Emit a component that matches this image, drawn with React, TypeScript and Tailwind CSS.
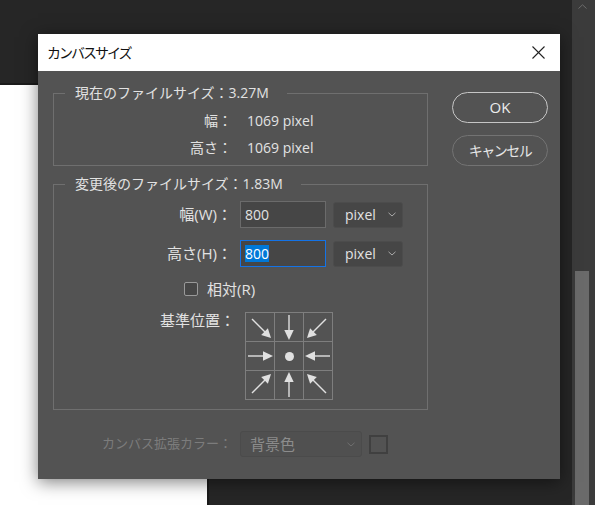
import React from "react";

const TXT = "text-[#e2e2e2]";

function Arrow({ diag, rot }: { diag?: boolean; rot: number }) {
  return (
    <svg width="28" height="28" viewBox="0 0 28 28">
      <g transform={`rotate(${rot} 14 14)`} fill="#e0e0e0" stroke="#e0e0e0">
        {diag ? (
          <>
            <line x1="6" y1="6" x2="19" y2="19" strokeWidth="1.4" />
            <polygon points="25,25 15.2,21.9 21.9,15.2" stroke="none" />
          </>
        ) : (
          <>
            <line x1="2" y1="14" x2="18" y2="14" strokeWidth="1.4" />
            <polygon points="27,14 17,9.3 17,18.7" stroke="none" />
          </>
        )}
      </g>
    </svg>
  );
}

function Chevron({ color = "#a8a8a8" }: { color?: string }) {
  return (
    <svg width="8" height="5" viewBox="0 0 8 5">
      <polyline points="0.5,0.8 4,4 7.5,0.8" fill="none" stroke={color} strokeWidth="1" />
    </svg>
  );
}

function UnitSelect() {
  return (
    <div className="flex h-[26px] w-[70px] items-center justify-between rounded-[3px] border border-[#4c4c4c] bg-[#464646] pl-[11px] pr-[6px]">
      <span className={`text-[14px] ${TXT}`}>pixel</span>
      <Chevron />
    </div>
  );
}

const cells: { diag?: boolean; rot?: number; dot?: boolean }[] = [
  { diag: true, rot: 0 },
  { rot: 90 },
  { diag: true, rot: 90 },
  { rot: 0 },
  { dot: true },
  { rot: 180 },
  { diag: true, rot: -90 },
  { rot: 270 },
  { diag: true, rot: 180 },
];

export default function App() {
  return (
    <div className="flex h-[505px] w-[595px] overflow-hidden bg-[#262626] font-['Open_Sans','Noto_Sans_CJK_JP',sans-serif]">
      {/* workspace */}
      <div className="relative flex-1">
        {/* document canvas behind the dialog */}
        <div className="absolute bottom-0 left-0 top-[83px] w-[209px] border-r-2 border-t-2 border-[#1b1b1b] bg-white" />

        {/* dialog window */}
        <div className="absolute left-[38px] top-[34px] flex h-[445px] w-[522px] flex-col shadow-[0_3px_16px_rgba(0,0,0,0.5)]">
          <div className="flex h-[37px] items-center justify-between bg-white pl-[9px] pr-[15px]">
            <span className="text-[14px] tracking-[-2px] text-[#111]">カンバスサイズ</span>
            <svg width="13" height="13" viewBox="0 0 13 13">
              <line x1="0.5" y1="0.5" x2="12.5" y2="12.5" stroke="#222" strokeWidth="1.1" />
              <line x1="12.5" y1="0.5" x2="0.5" y2="12.5" stroke="#222" strokeWidth="1.1" />
            </svg>
          </div>

          <div className="flex flex-1 gap-[24px] bg-[#535353] pl-[15px] pr-[12px] pt-[12px]">
            {/* left column */}
            <div className="flex w-[375px] flex-col">
              <fieldset className="border border-[#6f6f6f]">
                <legend className={`ml-[11px] pl-[10px] pr-[18px] text-[14px] leading-[20px] ${TXT}`}>
                  現在のファイルサイズ：3.27M
                </legend>
                <div className="flex flex-col pb-[4px] pt-[4px] text-[14px]">
                  <div className="flex h-[27px] items-center">
                    <span className={`w-[178px] text-right ${TXT}`}>幅：</span>
                    <span className={`ml-[15px] ${TXT}`}>1069 pixel</span>
                  </div>
                  <div className="flex h-[27px] items-center">
                    <span className={`w-[178px] text-right ${TXT}`}>高さ：</span>
                    <span className={`ml-[15px] ${TXT}`}>1069 pixel</span>
                  </div>
                </div>
              </fieldset>

              <fieldset className="mt-[8px] border border-[#6f6f6f]">
                <legend className={`ml-[11px] pl-[10px] pr-[18px] text-[14px] leading-[20px] ${TXT}`}>
                  変更後のファイルサイズ：1.83M
                </legend>
                <div className="flex flex-col pb-[9px] pt-[7px] text-[14px]">
                  <div className="flex h-[27px] items-center">
                    <span className={`w-[178px] text-right text-[15px] ${TXT}`}>幅(W)：</span>
                    <div className="ml-[8px] flex h-[27px] w-[86px] items-center border border-[#6b6b6b] bg-[#464646] pl-[4px]">
                      <span className={TXT}>800</span>
                    </div>
                    <div className="ml-[7px]">
                      <UnitSelect />
                    </div>
                  </div>
                  <div className="mt-[12px] flex h-[27px] items-center">
                    <span className={`w-[178px] text-right text-[15px] ${TXT}`}>高さ(H)：</span>
                    <div className="ml-[8px] flex h-[27px] w-[86px] items-center border border-[#1473e6] bg-[#464646] pl-[4px]">
                      <span className="bg-[#0078d7] leading-[17px] text-white">800</span>
                    </div>
                    <div className="ml-[7px]">
                      <UnitSelect />
                    </div>
                  </div>
                  <div className="mt-[12px] flex h-[20px] items-center pl-[130px]">
                    <div className="h-[14px] w-[14px] rounded-[2px] border border-[#9a9a9a] bg-[#474747]" />
                    <span className={`ml-[9px] text-[15px] ${TXT}`}>相対(R)</span>
                  </div>
                  <div className="mt-[13px] flex items-start">
                    <span className={`-mt-[2px] w-[181px] text-right text-[15px] leading-[20px] ${TXT}`}>基準位置：</span>
                    <div className="ml-[10px] grid w-[88px] grid-cols-3 border-l border-t border-[#7e7e7e]">
                      {cells.map((c, i) => (
                        <div
                          key={i}
                          className="flex h-[29px] w-[29px] items-center justify-center border-b border-r border-[#7e7e7e]"
                        >
                          {c.dot ? (
                            <div className="h-[9px] w-[9px] rounded-full bg-[#e0e0e0]" />
                          ) : (
                            <Arrow diag={c.diag} rot={c.rot ?? 0} />
                          )}
                        </div>
                      ))}
                    </div>
                  </div>
                </div>
              </fieldset>

              <div className="mt-[21px] flex h-[26px] items-center">
                <span className="w-[179px] text-right text-[13px] text-[#7c7c7c]">カンバス拡張カラー：</span>
                <div className="ml-[8px] flex h-[26px] w-[122px] items-center justify-between rounded-[3px] border border-[#4b4b4b] bg-[#505050] pl-[9px] pr-[6px]">
                  <span className="text-[15px] text-[#8c8c8c]">背景色</span>
                  <Chevron color="#6f6f6f" />
                </div>
                <div className="ml-[7px] h-[19px] w-[19px] border-2 border-[#404040] bg-[#535353]" />
              </div>
            </div>

            {/* buttons */}
            <div className="mt-[9px] flex w-[96px] flex-col gap-[12px]">
              <div className="flex h-[31px] items-center justify-center rounded-full border-[1.5px] border-[#c6c6c6] text-[15px] text-[#ececec]">
                OK
              </div>
              <div className="flex h-[31px] items-center justify-center rounded-full border-[1.5px] border-[#737373] text-[14px] tracking-[-1.5px] text-[#e6e6e6]">
                キャンセル
              </div>
            </div>
          </div>
        </div>
      </div>

      {/* scrollbar */}
      <div className="flex w-[23px] flex-col bg-[#3b3b3b] pl-[3px] pr-[6px]">
        <div className="flex h-[12px] items-center justify-center">
          <svg width="9" height="5" viewBox="0 0 9 5">
            <polyline points="0.5,4.5 4.5,0.8 8.5,4.5" fill="none" stroke="#6c6c6c" strokeWidth="1" />
          </svg>
        </div>
        <div className="mt-[259px] flex-1 bg-[#6a6a6a]" />
      </div>
    </div>
  );
}
